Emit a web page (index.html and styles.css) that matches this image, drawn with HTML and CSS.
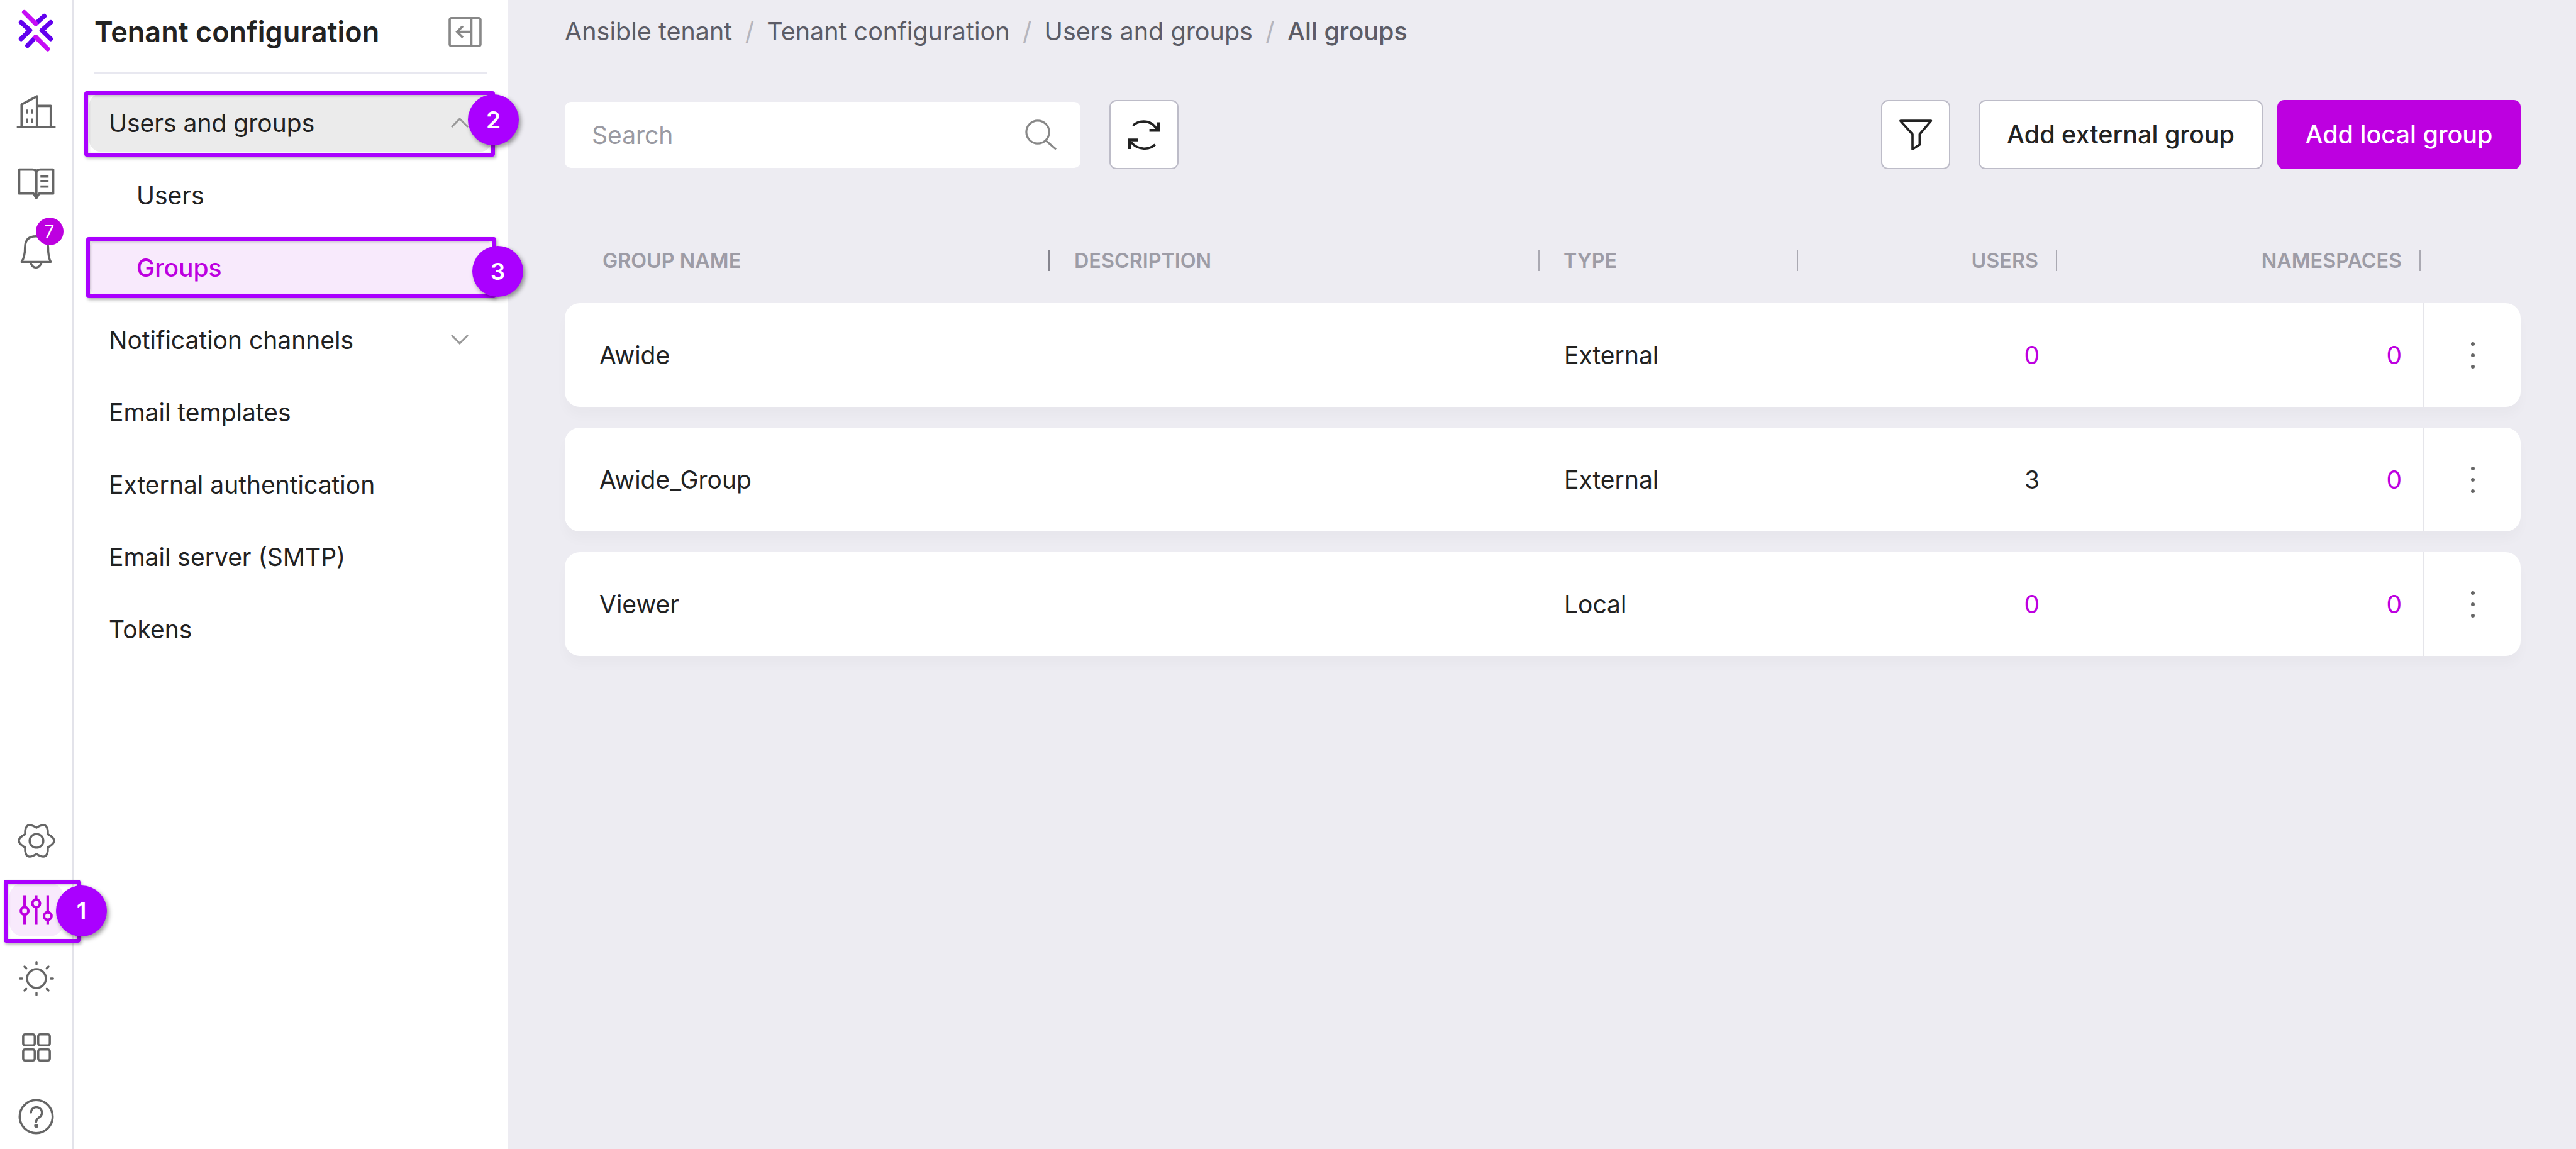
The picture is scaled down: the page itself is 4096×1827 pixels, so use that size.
FILE: index.html
```html
<!DOCTYPE html>
<html lang="en">
<head>
    <meta charset="UTF-8">
    <title>All groups</title>
    <link rel="stylesheet" href="styles.css">
</head>
<body>
    <div class="app">
        <nav class="rail">
            <div class="rail-logo">
                <svg class="ic-logo" viewBox="90 50 195 225" fill="none" stroke-width="24" stroke-linecap="round" stroke-linejoin="round">
                    <path d="M108 118 L155 160 L108 205 M264 118 L217 160 L264 205 M185 125 L230 85 M142 240 L185 195" stroke="#6200ee"/>
                    <path d="M125 65 L185 125 M185 195 L248 258" stroke="#c60cf5"/>
                </svg>
            </div>
            <div class="rail-group">
                <div class="rail-btn">
                    <svg class="ic-building" viewBox="80 495 215 180" fill="none" stroke="#666" stroke-width="12" stroke-linejoin="round">
                        <path d="M85 666 H287 M110 666 V548 L190 505 V666 M190 555 H262 V666"/>
                        <path d="M138 574 V596 M165 574 V596 M138 621 V643 M165 621 V643" stroke-width="12"/>
                    </svg>
                </div>
                <div class="rail-btn">
                    <svg class="ic-book" viewBox="88 884 192 172" fill="none" stroke="#666" stroke-width="12" stroke-linejoin="round">
                        <path d="M96 892 H165 Q185 892 185 910 Q185 892 205 892 H272 V1016 H200 L185 1040 L170 1016 H96 Z M185 910 V1030"/>
                        <path d="M206 928 H248 M206 953 H248 M206 980 H248" stroke-width="12"/>
                    </svg>
                </div>
                <div class="rail-btn">
                    <svg class="ic-bell" viewBox="100 1226 172 180" fill="none" stroke="#666" stroke-width="11" stroke-linejoin="round">
                        <path d="M110 1368 Q128 1345 128 1290 Q130 1235 185 1235 Q245 1235 248 1290 Q248 1345 262 1368 Z M157 1372 Q165 1398 185 1398 Q205 1398 213 1372"/>
                    </svg>
                    <span class="rail-count">7</span>
                </div>
            </div>
            <div class="rail-group rail-bottom">
                <div class="rail-btn">
                    <svg class="ic-gear" viewBox="-34 -32 68 64" fill="none" stroke="#666" stroke-width="3.8" stroke-linejoin="round">
                        <path d="M19.9 11.5 Q21 36.4 0 23 Q-21 36.4 -19.9 11.5 Q-42 0 -19.9 -11.5 Q-21 -36.4 0 -23 Q21 -36.4 19.9 -11.5 Q42 0 19.9 11.5 Z"/>
                        <circle r="12"/>
                    </svg>
                </div>
                <div class="rail-btn active">
                    <svg class="ic-sliders" viewBox="0 0 64 62" fill="none" stroke="#bd00e0" stroke-width="4.5">
                        <path d="M12 6 V57 M32 6 V57 M52 6 V57"/>
                        <circle cx="12" cy="33" r="6.5" fill="#f8eafc"/>
                        <circle cx="32" cy="20" r="6.5" fill="#f8eafc"/>
                        <circle cx="52" cy="42" r="6.5" fill="#f8eafc"/>
                    </svg>
                </div>
                <div class="rail-btn">
                    <svg class="ic-sun" viewBox="-32 -32 64 64" fill="none" stroke="#666" stroke-width="3.8" stroke-linecap="round">
                        <circle r="16.5"/>
                        <path d="M0 -25 V-29 M0 25 V29 M-25 0 H-29 M25 0 H29 M-18 -18 L-21 -21 M18 -18 L21 -21 M-18 18 L-21 21 M18 18 L21 21"/>
                    </svg>
                </div>
                <div class="rail-btn">
                    <svg class="ic-grid" viewBox="0 0 50 50" fill="none" stroke="#666" stroke-width="3.8">
                        <rect x="2" y="2" width="20" height="19" rx="3"/>
                        <rect x="28" y="2" width="20" height="19" rx="3"/>
                        <rect x="2" y="28" width="20" height="19" rx="3"/>
                        <rect x="28" y="28" width="20" height="19" rx="3"/>
                    </svg>
                </div>
                <div class="rail-btn">
                    <svg class="ic-help" viewBox="-31 -31 62 62" fill="none" stroke="#666" stroke-width="3.8" stroke-linecap="round">
                        <circle r="28.5"/>
                        <path d="M-9 -7 A9.5 9.5 0 1 1 5 1.5 C1 4 0 5.500 0 9"/>
                        <circle cy="16" r="1.6" fill="#666"/>
                    </svg>
                </div>
            </div>
        </nav>

        <aside class="sidebar">
            <div class="side-head">
                <span class="side-title">Tenant configuration</span>
                <svg class="ic-collapse" viewBox="0 0 58 53" fill="none" stroke="#888" stroke-width="4">
                    <rect x="2" y="2" width="54" height="49" rx="3"/>
                    <path d="M40 2 V51 M40 26 H16 M25 16 L15 26 L25 36"/>
                </svg>
            </div>
            <ul class="menu">
                <li class="menu-item open">Users and groups
                    <svg class="chevron" viewBox="0 0 30 16" fill="none" stroke="#999" stroke-width="3"><path d="M2 15 L15 2 L28 15"/></svg>
                </li>
                <li class="menu-item sub">Users</li>
                <li class="menu-item sub selected">Groups</li>
                <li class="menu-item">Notification channels
                    <svg class="chevron" viewBox="0 0 30 16" fill="none" stroke="#999" stroke-width="3"><path d="M2 1 L15 14 L28 1"/></svg>
                </li>
                <li class="menu-item">Email templates</li>
                <li class="menu-item">External authentication</li>
                <li class="menu-item">Email server (SMTP)</li>
                <li class="menu-item">Tokens</li>
            </ul>
        </aside>

        <main class="main">
            <div class="breadcrumb">
                <span>Ansible tenant</span><i>/</i>
                <span>Tenant configuration</span><i>/</i>
                <span>Users and groups</span><i>/</i>
                <span class="current">All groups</span>
            </div>

            <div class="toolbar">
                <div class="search">
                    <span>Search</span>
                    <svg class="ic-search" viewBox="0 0 56 54" fill="none" stroke="#888" stroke-width="3.5">
                        <circle cx="22" cy="22" r="20"/>
                        <path d="M36 37 L54 52"/>
                    </svg>
                </div>
                <button class="btn btn-icon refresh">
                    <svg class="ic-refresh" viewBox="0 0 55 53" fill="none" stroke="#222" stroke-width="4">
                        <path d="M8.300 11 C14 3 38 -3 50 17"/>
                        <path d="M53 5 V19 H37" stroke-width="5"/>
                        <path d="M47 44 C38 53 17 55 5 40"/>
                        <path d="M2 52 V36 H17" stroke-width="5"/>
                    </svg>
                </button>
                <button class="btn btn-icon filter">
                    <svg class="ic-filter" viewBox="0 0 59 55" fill="none" stroke="#222" stroke-width="4" stroke-linejoin="round">
                        <path d="M3 3.500 H56.500 L36.500 27 V45 L24 53 V27 Z"/>
                    </svg>
                </button>
                <button class="btn external">Add external group</button>
                <button class="btn primary">Add local group</button>
            </div>

            <div class="table-head">
                <div class="th name">Group name</div>
                <div class="th desc">Description</div>
                <div class="th type">Type</div>
                <div class="th users">Users</div>
                <div class="th ns">Namespaces</div>
            </div>

            <div class="rows">
                <div class="row">
                    <div class="cell name">Awide</div>
                    <div class="cell"></div>
                    <div class="cell type">External</div>
                    <div class="cell users link">0</div>
                    <div class="cell ns link">0</div>
                    <div class="cell actions"><svg class="ic-kebab" viewBox="0 0 8 44" fill="#666"><circle cx="4" cy="4" r="3"/><circle cx="4" cy="22" r="3"/><circle cx="4" cy="40" r="3"/></svg></div>
                </div>
                <div class="row">
                    <div class="cell name">Awide_Group</div>
                    <div class="cell"></div>
                    <div class="cell type">External</div>
                    <div class="cell users">3</div>
                    <div class="cell ns link">0</div>
                    <div class="cell actions"><svg class="ic-kebab" viewBox="0 0 8 44" fill="#666"><circle cx="4" cy="4" r="3"/><circle cx="4" cy="22" r="3"/><circle cx="4" cy="40" r="3"/></svg></div>
                </div>
                <div class="row">
                    <div class="cell name">Viewer</div>
                    <div class="cell"></div>
                    <div class="cell type">Local</div>
                    <div class="cell users link">0</div>
                    <div class="cell ns link">0</div>
                    <div class="cell actions"><svg class="ic-kebab" viewBox="0 0 8 44" fill="#666"><circle cx="4" cy="4" r="3"/><circle cx="4" cy="22" r="3"/><circle cx="4" cy="40" r="3"/></svg></div>
                </div>
            </div>
        </main>
    </div>

    <!-- tutorial callouts on top of the page -->
    <div class="callout-box box-1"></div>
    <div class="callout-box box-2"></div>
    <div class="callout-box box-3"></div>
    <div class="callout-num num-1">1</div>
    <div class="callout-num num-2">2</div>
    <div class="callout-num num-3">3</div>
</body>
</html>
```

FILE: styles.css
```css
* {
    margin: 0;
    padding: 0;
    box-sizing: border-box;
}

body {
    width: 4096px;
    height: 1827px;
    overflow: hidden;
    position: relative;
    background-color: #edecf2;
    font-family: 'Inter', 'Liberation Sans', sans-serif;
    font-size: 39px;
    color: #222;
}

svg {
    display: block;
    flex: none;
}

.app {
    display: flex;
    height: 1827px;
}

/* left icon rail */
.rail {
    width: 117px;
    flex: none;
    display: flex;
    flex-direction: column;
    align-items: center;
    background-color: white;
    border-right: 2px solid #e3e3ea;
    padding-bottom: 9px;
}

.rail-logo {
    height: 98px;
    display: flex;
    align-items: center;
    justify-content: center;
}

.ic-logo { width: 59px; height: 68px; }

.rail-group {
    display: flex;
    flex-direction: column;
    gap: 26px;
    margin-top: 37px;
}

.rail-bottom {
    margin-top: auto;
    gap: 24.600px;
}

.rail-btn {
    width: 86px;
    height: 85px;
    position: relative;
    display: flex;
    align-items: center;
    justify-content: center;
    border-radius: 22px;
}

.rail-btn.active { background-color: #f8eafc; }

.rail-count {
    position: absolute;
    left: 42px;
    top: -11px;
    width: 44px;
    height: 44px;
    border-radius: 50%;
    background-color: #bd00e0;
    color: white;
    font-size: 28px;
    line-height: 44px;
    text-align: center;
}

.ic-building { width: 66px; height: 55px; }
.ic-book { width: 59px; height: 53px; margin-top: 10px; }
.ic-bell { width: 53px; height: 55px; margin-top: 2px; }
.ic-gear { width: 62px; height: 58px; }
.ic-sliders { width: 59px; height: 57px; }
.ic-sun { width: 58px; height: 58px; }
.ic-grid { width: 46px; height: 46px; }
.ic-help { width: 57px; height: 57px; }

/* second column */
.sidebar {
    width: 691px;
    flex: none;
    background-color: white;
    border-right: 1px solid #e3e3ea;
}

.side-head {
    height: 117px;
    margin: 0 33px;
    display: flex;
    align-items: center;
    justify-content: space-between;
    border-bottom: 2px solid #e8e8f0;
    padding-bottom: 14px;
    padding-right: 8px;
}

.side-title {
    font-size: 45px;
    font-weight: 600;
    color: #222;
}

.ic-collapse { width: 53px; height: 48px; }

.menu {
    list-style: none;
    margin: 32px 0 0 25px;
    width: 640px;
    display: flex;
    flex-direction: column;
    gap: 23px;
}

.menu-item {
    height: 92px;
    padding: 0 36px 0 31px;
    display: flex;
    align-items: center;
    justify-content: space-between;
    border-radius: 18px;
}

.menu-item.open { background-color: #ebebeb; }
.menu-item.sub { padding-left: 75px; }

.menu-item.selected {
    background-color: #f8eafc;
    color: #bd00e0;
    font-weight: 500;
}

.chevron { width: 30px; height: 16px; }

/* main column */
.main {
    flex: 1;
    padding: 0 88px 0 90px;
}

.breadcrumb {
    height: 100px;
    display: flex;
    align-items: center;
    font-size: 39.500px;
    color: #5c5c66;
}

.breadcrumb i {
    font-style: normal;
    color: #b5b5bd;
    width: 55px;
    text-align: center;
}

.breadcrumb .current { font-weight: 500; }

.toolbar {
    margin-top: 59px;
    height: 110px;
    display: flex;
    align-items: center;
}

.search {
    width: 820px;
    height: 105px;
    padding: 0 37px 0 43px;
    display: flex;
    align-items: center;
    justify-content: space-between;
    background-color: white;
    border-radius: 10px;
    color: #9a9aa2;
}

.ic-search { width: 51px; height: 49px; }

.btn {
    height: 110px;
    background-color: white;
    border: 2.500px solid #bdbcc8;
    border-radius: 11px;
    font-family: inherit;
    font-size: 39.500px;
    font-weight: 500;
    color: #222;
}

.btn-icon {
    width: 110px;
    display: flex;
    align-items: center;
    justify-content: center;
}

.refresh { margin-left: 46px; }
.filter { margin-left: auto; }
.external { width: 452px; margin-left: 45px; }

.primary {
    width: 387px;
    margin-left: 23px;
    background-color: #bd00e0;
    border-color: #bd00e0;
    color: white;
}

.ic-refresh { width: 50px; height: 48px; }
.ic-filter { width: 54px; height: 50px; }

/* table */
.table-head,
.row {
    display: grid;
    grid-template-columns: 772px 778px 411px 412px 578px 159px;
}

.table-head {
    margin-top: 129px;
    height: 33px;
}

.th {
    display: flex;
    align-items: center;
    height: 33px;
    font-size: 32.300px;
    line-height: 33px;
    font-weight: 600;
    text-transform: uppercase;
    color: #9d9ca6;
    border-right: 2px solid #aaa9b2;
}

.th.name {
    padding-left: 60px;
    border-right: 3px solid #85848e;
}

.th.desc,
.th.type { padding-left: 38px; }

.th.users,
.th.ns {
    justify-content: flex-end;
    padding-right: 28px;
}

.rows {
    margin-top: 51px;
    display: flex;
    flex-direction: column;
    gap: 33px;
}

.row {
    height: 165px;
    background-color: white;
    border-radius: 24px;
    box-shadow: 0 14px 18px rgba(0,0,0,0.025);
}

.cell {
    display: flex;
    align-items: center;
}

.cell.name { padding-left: 55px; }
.cell.type { padding-left: 39px; }

.cell.users,
.cell.ns {
    justify-content: flex-end;
    padding-right: 30px;
}

.cell.users { padding-right: 28px; }

.link { color: #bd00e0; }

.cell.actions {
    justify-content: center;
    margin-left: 3px;
    padding-left: 2px;
    border-left: 2px solid #e5e5ea;
}

.ic-kebab { width: 8px; height: 44px; }

/* callouts */
.callout-box {
    position: absolute;
    border: 6px solid #aa00ff;
    border-radius: 4px;
    box-shadow: 2px 3px 5px rgba(0,0,0,0.3), inset 1px 2px 4px rgba(0,0,0,0.2);
}

.box-1 { left: 6px; top: 1399px; width: 122px; height: 100px; }
.box-2 { left: 134px; top: 145px; width: 653px; height: 104px; }
.box-3 { left: 137px; top: 377px; width: 652px; height: 97px; }

.callout-num {
    position: absolute;
    width: 81px;
    height: 81px;
    border-radius: 50%;
    background-color: #aa00ff;
    color: white;
    font-size: 37px;
    font-weight: 600;
    line-height: 81px;
    text-align: center;
    box-shadow: 3px 4px 7px rgba(0,0,0,0.4);
}

.num-1 { left: 89px; top: 1408px; }
.num-2 { left: 744px; top: 150px; }
.num-3 { left: 751px; top: 391px; }
```
